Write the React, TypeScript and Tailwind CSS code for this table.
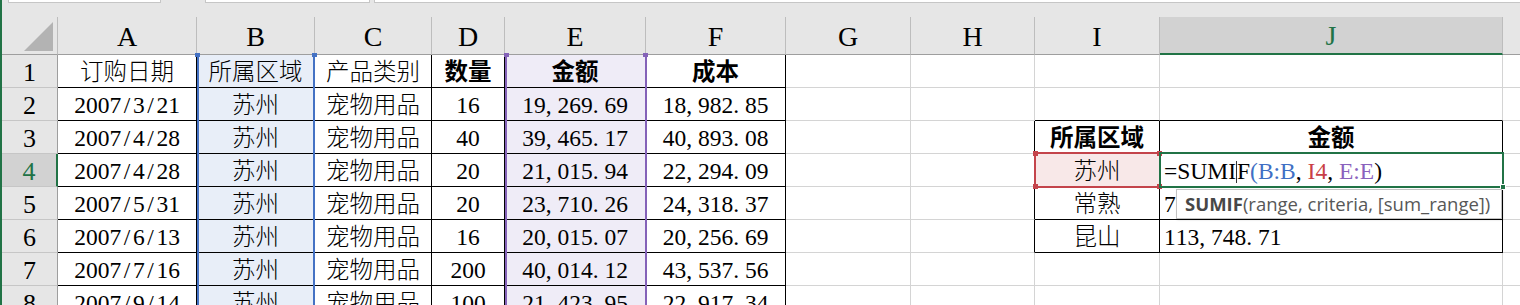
import type { ReactNode } from 'react'

const COLS = ['A', 'B', 'C', 'D', 'E', 'F', 'G', 'H', 'I', 'J', 'K']

const data: string[][] = [
  ['订购日期', '所属区域', '产品类别', '数量', '金额', '成本'],
  ['2007/3/21', '苏州', '宠物用品', '16', '19,269.69', '18,982.85'],
  ['2007/4/28', '苏州', '宠物用品', '40', '39,465.17', '40,893.08'],
  ['2007/4/28', '苏州', '宠物用品', '20', '21,015.94', '22,294.09'],
  ['2007/5/31', '苏州', '宠物用品', '20', '23,710.26', '24,318.37'],
  ['2007/6/13', '苏州', '宠物用品', '16', '20,015.07', '20,256.69'],
  ['2007/7/16', '苏州', '宠物用品', '200', '40,014.12', '43,537.56'],
  ['2007/9/14', '苏州', '宠物用品', '100', '21,423.95', '22,917.34'],
]

// summary block I3:J6
const summary: Record<number, [string, string]> = {
  3: ['所属区域', '金额'],
  4: ['苏州', ''],
  5: ['常熟', '7'],
  6: ['昆山', '113,748.71'],
}

// SimSun-like metrics: punctuation takes half an em
function Num({ v }: { v: string }) {
  return (
    <>
      {v.split('').map((ch, i) =>
        ch === '/' ? (
          <span key={i} className="inline-block w-[0.5em] text-center">/</span>
        ) : ch === ',' || ch === '.' ? (
          <span key={i} className="inline-block w-[0.5em]">{ch}</span>
        ) : (
          <span key={i}>{ch}</span>
        )
      )}
    </>
  )
}

function Formula() {
  return (
    <span className="whitespace-pre">
      <span>=SUMI</span>
      <span className="inline-block w-px h-[22px] bg-[#333] align-[-4px]" />
      <span>F</span>
      <span className="text-[#3f6fc4]">(B:B</span>
      <span>, </span>
      <span className="text-[#c93f47]">I4</span>
      <span>, </span>
      <span className="text-[#8a62bd]">E:E</span>
      <span>)</span>
    </span>
  )
}

function Cell({ r, c }: { r: number; c: number }) {
  const inData = c <= 5
  const inSum = (c === 8 || c === 9) && r >= 3 && r <= 6
  const rightBlack = inData || inSum || (c === 7 && r >= 3 && r <= 6)
  const bottomBlack = inData || ((c === 8 || c === 9) && r >= 2 && r <= 6)

  let content: ReactNode = null
  let bold = false
  let left = false
  if (inData) {
    const v = data[r - 1][c]
    bold = r === 1 && c >= 3
    content = /^[\d,./]+$/.test(v) ? <Num v={v} /> : v
  } else if (inSum) {
    const v = summary[r][c - 8]
    bold = r === 3
    if (c === 9 && r >= 4) left = true
    if (c === 9 && r === 4) content = <Formula />
    else content = /^[\d,./]+$/.test(v) ? <Num v={v} /> : v
  }

  let bg = 'bg-white'
  if (c === 1) bg = 'bg-[#e8eef8]'
  if (c === 4) bg = 'bg-[#efecf7]'
  if (c === 8 && r === 4) bg = 'bg-[#f8e8e8]'

  return (
    <div
      className={`flex items-center pt-[3px] overflow-hidden whitespace-nowrap ${bg} ${
        left ? 'justify-start pl-[4px]' : 'justify-center'
      } ${bold ? 'font-bold' : 'font-light'} ${
        c === 10 ? '' : rightBlack ? 'border-r border-r-black' : 'border-r border-r-[#d4d4d4]'
      } border-b ${bottomBlack ? 'border-b-black' : 'border-b-[#d4d4d4]'}`}
    >
      {content}
    </div>
  )
}

export default function App() {
  const rows = [1, 2, 3, 4, 5, 6, 7, 8]
  return (
    <div className="relative flex w-[1520px] h-[305px] overflow-hidden bg-white text-black font-['Liberation_Serif','Noto_Sans_CJK_SC',serif]">
      <div className="w-[2px] shrink-0 bg-[#217346]" />
      <div className="flex flex-col">
        {/* formula bar remnant */}
        <div className="h-[17px] shrink-0 bg-[#e6e6e6]">
          <div className="flex h-[3px]">
            <div className="w-[6px]" />
            <div className="w-[153px] bg-white border-x border-b border-[#c6c6c6]" />
            <div className="w-[44px]" />
            <div className="w-[165px] bg-white border-x border-b border-[#c6c6c6]" />
            <div className="w-[4px]" />
            <div className="flex-1 bg-white border-l border-b border-[#c6c6c6]" />
          </div>
        </div>

        <div className="grid shrink-0 grid-cols-[56px_139px_118px_117px_73px_141px_140px_125px_124px_125px_343px_17px] grid-rows-[38px_repeat(8,33px)] text-[23.5px]">
          {/* column headers */}
          <div className="relative bg-[#e6e6e6] border-r border-r-[#bdbdbd] border-b border-b-[#9e9e9e]">
            <svg width="56" height="38" className="absolute left-0 top-0">
              <polygon points="22,34 51,34 51,5" fill="#b3b3b3" />
            </svg>
          </div>
          {COLS.map((l) =>
            l === 'J' ? (
              <div
                key={l}
                className="flex items-center justify-center pt-[2px] bg-[#d2d2d2] text-[#217346] text-[28px] border-r border-r-[#bdbdbd] border-b-2 border-b-[#217346]"
              >
                {l}
              </div>
            ) : l === 'K' ? (
              <div key={l} className="bg-[#e6e6e6] border-b border-b-[#9e9e9e]" />
            ) : (
              <div
                key={l}
                className="flex items-center justify-center pt-[2px] bg-[#e6e6e6] text-[28px] border-r border-r-[#bdbdbd] border-b border-b-[#9e9e9e]"
              >
                {l}
              </div>
            )
          )}

          {rows.map((r) => (
            <div key={r} className="contents">
              {r === 4 ? (
                <div className="flex items-center justify-center pt-[2px] text-[26px] bg-[#d2d2d2] text-[#217346] border-r-2 border-r-[#217346] border-b border-b-[#c6c6c6]">
                  {r}
                </div>
              ) : (
                <div className="flex items-center justify-center pt-[2px] text-[26px] bg-[#e6e6e6] border-r border-r-[#9e9e9e] border-b border-b-[#c6c6c6]">
                  {r}
                </div>
              )}
              {COLS.map((_, c) => (
                <Cell key={c} r={r} c={c} />
              ))}
            </div>
          ))}
        </div>
      </div>

      {/* range highlight: B:B */}
      <div className="absolute left-[197px] top-[55px] w-[118px] h-[260px] border-x-2 border-[#4472c4]" />
      <div className="absolute left-[195px] top-[53px] w-[5px] h-[4px] bg-[#4472c4]" />
      <div className="absolute left-[312px] top-[53px] w-[5px] h-[4px] bg-[#4472c4]" />

      {/* range highlight: E:E */}
      <div className="absolute left-[505px] top-[55px] w-[142px] h-[260px] border-x-2 border-[#8462b8]" />
      <div className="absolute left-[504px] top-[53px] w-[5px] h-[4px] bg-[#8462b8]" />
      <div className="absolute left-[643px] top-[53px] w-[5px] h-[4px] bg-[#8462b8]" />

      {/* I4 reference */}
      <div className="absolute left-[1034px] top-[152px] w-[127px] h-[36px] border-2 border-[#c4444b]" />
      <div className="absolute left-[1033px] top-[151px] w-[5px] h-[5px] bg-[#c4444b]" />
      <div className="absolute left-[1157px] top-[151px] w-[5px] h-[5px] bg-[#c4444b]" />
      <div className="absolute left-[1033px] top-[184px] w-[5px] h-[5px] bg-[#c4444b]" />
      <div className="absolute left-[1157px] top-[184px] w-[5px] h-[5px] bg-[#c4444b]" />

      {/* active cell J4 */}
      <div className="absolute left-[1159px] top-[152px] w-[345px] h-[36px] border-2 border-[#217346]" />
      <div className="absolute left-[1500px] top-[184px] w-[6px] h-[6px] bg-[#217346] border border-white" />

      {/* function tooltip */}
      <div className="absolute left-[1176px] top-[189px] w-[326px] h-[30px] flex items-center pl-[8px] bg-white border border-[#c3c3c3] shadow-[1px_1px_2px_rgba(0,0,0,0.15)] text-[18.5px] text-[#575757] font-['Open_Sans','Noto_Sans',sans-serif] whitespace-nowrap">
        <span className="font-bold text-[#474747]">SUMIF</span>
        <span>(range, criteria, [sum_range])</span>
      </div>
    </div>
  )
}
